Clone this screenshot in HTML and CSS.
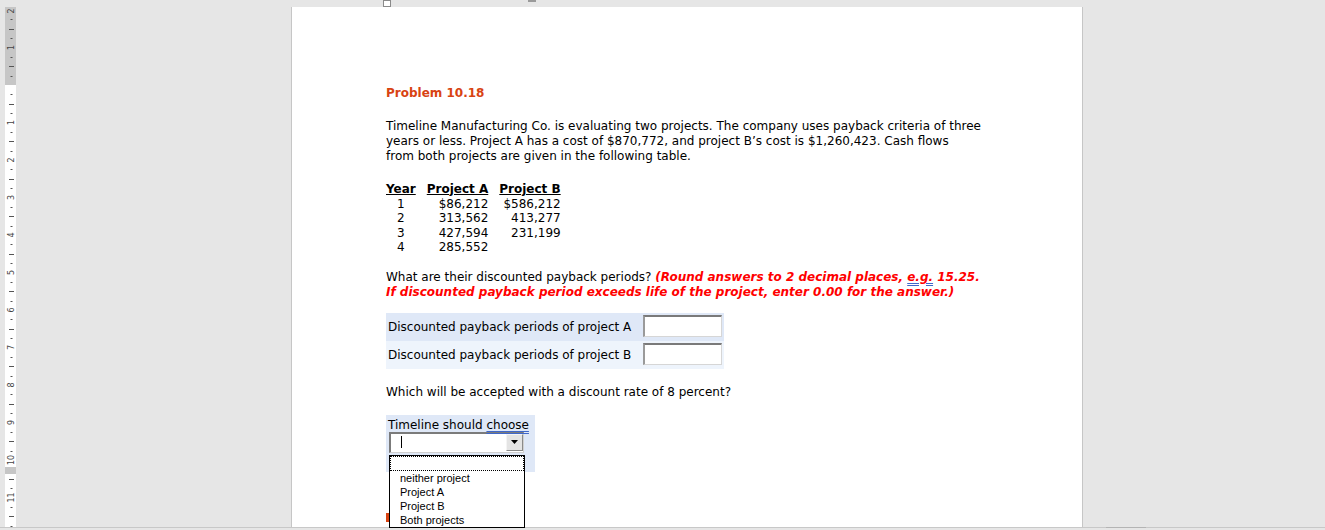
FILE: index.html
```html
<!DOCTYPE html>
<html>
<head>
<meta charset="utf-8">
<title>Problem 10.18</title>
<link rel="stylesheet" href="styles.css">
</head>
<body>
<div class="marker-square"></div>
<div class="marker-bar"></div>
<div class="screen">
  <div class="ruler">
    <svg width="11" height="520" viewBox="0 0 11 520">
      <rect x="0" y="0" width="11" height="520" fill="#ffffff"/>
      <rect x="0" y="0" width="11" height="78" fill="#c6c6c6"/>
      <rect x="0" y="460" width="11" height="7" fill="#c6c6c6"/>
      <g fill="#555555">
        <rect x="5.5" y="12" width="2" height="1"/><rect x="5.5" y="31" width="2" height="1"/>
        <rect x="5.5" y="50" width="2" height="1"/><rect x="5.5" y="69" width="2" height="1"/>
        <rect x="5.5" y="87" width="2" height="1"/><rect x="5.5" y="106" width="2" height="1"/>
        <rect x="5.5" y="125" width="2" height="1"/><rect x="5.5" y="144" width="2" height="1"/>
        <rect x="5.5" y="162" width="2" height="1"/><rect x="5.5" y="181" width="2" height="1"/>
        <rect x="5.5" y="200" width="2" height="1"/><rect x="5.5" y="219" width="2" height="1"/>
        <rect x="5.5" y="237" width="2" height="1"/><rect x="5.5" y="256" width="2" height="1"/>
        <rect x="5.5" y="275" width="2" height="1"/><rect x="5.5" y="294" width="2" height="1"/>
        <rect x="5.5" y="312" width="2" height="1"/><rect x="5.5" y="331" width="2" height="1"/>
        <rect x="5.5" y="350" width="2" height="1"/><rect x="5.5" y="369" width="2" height="1"/>
        <rect x="5.5" y="387" width="2" height="1"/><rect x="5.5" y="406" width="2" height="1"/>
        <rect x="5.5" y="425" width="2" height="1"/><rect x="5.5" y="444" width="2" height="1"/>
        <rect x="5.5" y="481" width="2" height="1"/><rect x="5.5" y="500" width="2" height="1"/>
        <rect x="5.5" y="519" width="2" height="1"/>
        <rect x="4" y="22" width="5" height="1"/><rect x="4" y="59" width="5" height="1"/>
        <rect x="4" y="97" width="5" height="1"/><rect x="4" y="134" width="5" height="1"/>
        <rect x="4" y="172" width="5" height="1"/><rect x="4" y="209" width="5" height="1"/>
        <rect x="4" y="247" width="5" height="1"/><rect x="4" y="284" width="5" height="1"/>
        <rect x="4" y="322" width="5" height="1"/><rect x="4" y="359" width="5" height="1"/>
        <rect x="4" y="397" width="5" height="1"/><rect x="4" y="434" width="5" height="1"/>
        <rect x="4" y="472" width="5" height="1"/><rect x="4" y="509" width="5" height="1"/>
      </g>
      <g class="ruler-num">
        <text transform="translate(6.5 4) rotate(-90)">2</text>
        <text transform="translate(6.5 40.5) rotate(-90)">1</text>
        <text transform="translate(6.5 115.5) rotate(-90)">1</text>
        <text transform="translate(6.5 153) rotate(-90)">2</text>
        <text transform="translate(6.5 190.5) rotate(-90)">3</text>
        <text transform="translate(6.5 228) rotate(-90)">4</text>
        <text transform="translate(6.5 265.5) rotate(-90)">5</text>
        <text transform="translate(6.5 303) rotate(-90)">6</text>
        <text transform="translate(6.5 340.5) rotate(-90)">7</text>
        <text transform="translate(6.5 378) rotate(-90)">8</text>
        <text transform="translate(6.5 415.5) rotate(-90)">9</text>
        <text transform="translate(6.5 453) rotate(-90)">10</text>
        <text transform="translate(6.5 490.5) rotate(-90)">11</text>
      </g>
    </svg>
  </div>
  <div class="page">
    <div class="content">
      <h1 class="title">Problem 10.18</h1>
      <p class="intro">Timeline Manufacturing Co. is evaluating two projects. The company uses payback criteria of three<br>years or less. Project A has a cost of $870,772, and project B’s cost is $1,260,423. Cash flows<br>from both projects are given in the following table.</p>

      <div class="flows">
        <div class="th">Year</div><div class="th">Project A</div><div class="th">Project B</div>
        <div class="yr">1</div><div class="num">$86,212</div><div class="num">$586,212</div>
        <div class="yr">2</div><div class="num">313,562</div><div class="num">413,277</div>
        <div class="yr">3</div><div class="num">427,594</div><div class="num">231,199</div>
        <div class="yr">4</div><div class="num">285,552</div><div class="num"></div>
      </div>

      <p class="question">What are their discounted payback periods? <em class="hint">(Round answers to 2 decimal places, <span class="grammar">e.g.</span> 15.25.<br>If discounted payback period exceeds life of the project, enter 0.00 for the answer.)</em></p>

      <div class="answers">
        <div class="answer-row row-a">
          <span class="answer-label">Discounted payback periods of project A</span>
          <span class="answer-input"></span>
        </div>
        <div class="answer-row row-b">
          <span class="answer-label">Discounted payback periods of project B</span>
          <span class="answer-input"></span>
        </div>
      </div>

      <p class="question2">Which will be accepted with a discount rate of 8 percent?</p>

      <div class="choose-box">
        <div class="choose-label">Timeline should <span class="grammar">choose</span></div>
        <div class="select">
          <span class="caret"></span>
          <span class="select-btn"><svg width="9" height="5" viewBox="0 0 9 5"><path d="M0 0H7L3.5 4Z" fill="#000"/></svg></span>
        </div>
        <div class="dropdown">
          <div class="opt opt-empty"></div>
          <div class="opt">neither project</div>
          <div class="opt">Project A</div>
          <div class="opt">Project B</div>
          <div class="opt">Both projects</div>
        </div>
      </div>

      <div class="next-mark"></div>
    </div>
  </div>
</div>
<div class="bottom-bar"><div class="bottom-thumb"></div></div>
</body>
</html>
```

FILE: styles.css
```css
html, body {
  margin: 0;
  padding: 0;
}
body {
  width: 1325px;
  height: 530px;
  overflow: hidden;
  background: #e6e6e6;
  position: relative;
  font-family: "DejaVu Sans", Verdana, sans-serif;
  font-size: 12px;
  color: #000;
}
.marker-square {
  position: absolute;
  left: 383px;
  top: 0;
  width: 6px;
  height: 5px;
  border: 1px solid #8a8a8a;
  background: #fff;
}
.marker-bar {
  position: absolute;
  left: 528px;
  top: 0;
  width: 8px;
  height: 2px;
  background: #9a9a9a;
}
.screen {
  display: flex;
  height: 520px;
  padding-top: 7px;
}
.ruler {
  margin-left: 5px;
  width: 11px;
  height: 520px;
  flex: none;
}
.ruler svg { display: block; }
.ruler-num text {
  font-family: "DejaVu Sans", sans-serif;
  font-size: 8px;
  fill: #444;
  text-anchor: middle;
  dominant-baseline: central;
}
.page {
  margin-left: 275px;
  width: 792px;
  height: 520px;
  flex: none;
  box-sizing: border-box;
  background: #fff;
  border-left: 1px solid #c6c6c6;
  border-right: 1px solid #c6c6c6;
}
.content {
  padding: 79px 0 0 94px;
  line-height: 15px;
}
.title {
  margin: 0;
  font-size: 12px;
  font-weight: bold;
  line-height: 15px;
  color: #d84312;
}
.intro {
  margin: 17.5px 0 0;
  white-space: nowrap;
}
.flows {
  margin-top: 18px;
  display: grid;
  grid-template-columns: auto auto auto;
  justify-content: start;
  column-gap: 11px;
  line-height: 14.5px;
}
.th {
  font-weight: bold;
  text-decoration: underline;
  line-height: 15px;
}
.yr { text-align: center; }
.num { text-align: right; }
.question {
  margin: 15px 0 0;
  white-space: nowrap;
}
.hint {
  color: #f00;
  font-weight: bold;
  font-style: italic;
}
.grammar {
  text-decoration: underline double #3f67c9;
  text-underline-offset: 2px;
}
.answers {
  margin-top: 13.5px;
  width: 338px;
}
.answer-row {
  height: 28px;
  display: flex;
  justify-content: space-between;
  align-items: center;
  padding: 0 2px;
}
.row-a { background: #dfe8f7; }
.row-b { background: #eef4fc; }
.answer-input {
  align-self: flex-start;
  margin-top: 2px;
  width: 79px;
  height: 22px;
  box-sizing: border-box;
  background: #fff;
  border-top: 2px solid #7a7a7a;
  border-left: 2px solid #9a9a9a;
  border-right: 1px solid #d6d6d6;
  border-bottom: 1px solid #d6d6d6;
}
.question2 {
  margin: 15.5px 0 0;
}
.choose-box {
  position: relative;
  margin-top: 15.5px;
  width: 149px;
  height: 57px;
  box-sizing: border-box;
  padding: 2.5px 0 0 2px;
  background: #dfe8f7;
}
.choose-label {
  line-height: 15px;
}
.select {
  margin: -0.5px 0 0 1px;
  width: 135px;
  height: 21px;
  box-sizing: border-box;
  background: #fff;
  border-top: 2px solid #7b7b7b;
  border-left: 2px solid #7b7b7b;
  border-right: 1px solid #d0d0d0;
  border-bottom: 1px solid #d0d0d0;
  display: flex;
  justify-content: space-between;
  align-items: flex-start;
}
.caret {
  margin: 2px 0 0 10px;
  width: 1px;
  height: 12px;
  background: #000;
}
.select-btn {
  width: 17px;
  height: 17px;
  box-sizing: border-box;
  background: #e4e4e4;
  border-top: 1px solid #f4f4f4;
  border-left: 1px solid #f4f4f4;
  border-right: 1px solid #8a8a8a;
  border-bottom: 1px solid #8a8a8a;
  display: flex;
  align-items: center;
  justify-content: center;
}
.select-btn svg { display: block; margin-left: 1px; }
.dropdown {
  position: absolute;
  left: 3px;
  top: 40px;
  width: 136px;
  box-sizing: border-box;
  background: #fff;
  border: 1px solid #000;
  font-family: "Liberation Sans", Arial, sans-serif;
  font-size: 11px;
  z-index: 2;
}
.opt {
  height: 14px;
  line-height: 14px;
  padding-left: 10px;
  white-space: nowrap;
}
.opt-empty {
  height: 15px;
  box-sizing: border-box;
  border: 1px dotted #000;
}
.next-mark {
  margin-top: 41px;
  width: 3px;
  height: 9px;
  background: #d84312;
}
.bottom-bar {
  height: 1px;
  background: #c8c8c8;
  display: flex;
}
.bottom-thumb {
  margin-left: 1106px;
  width: 40px;
  background: #b4b4b4;
}
```
